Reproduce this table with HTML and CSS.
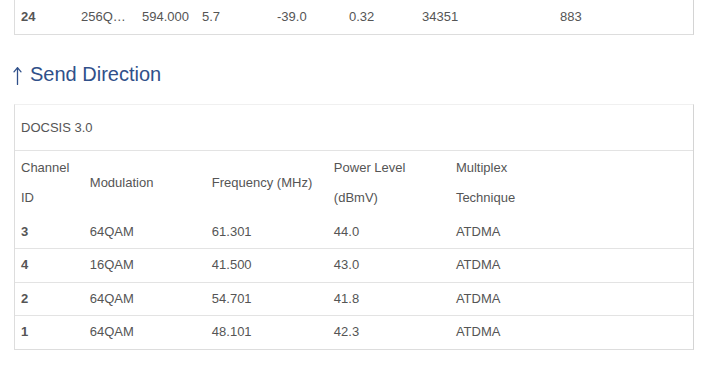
FILE: index.html
```html
<!DOCTYPE html>
<html>
<head>
<meta charset="utf-8">
<link rel="stylesheet" href="styles.css">
</head>
<body>
<div class="page">
  <div class="panel panel-top">
    <table class="grid grid-recv">
      <colgroup>
        <col class="r1"><col class="r2"><col class="r3"><col class="r4"><col class="r5"><col class="r6"><col class="r7"><col class="r8">
      </colgroup>
      <tbody>
        <tr>
          <td class="strong">24</td>
          <td class="clip">256QAM</td>
          <td>594.000</td>
          <td>5.7</td>
          <td>-39.0</td>
          <td>0.32</td>
          <td>34351</td>
          <td>883</td>
        </tr>
      </tbody>
    </table>
  </div>

  <h2 class="section-title">
    <svg class="arrow" width="9" height="19" viewBox="0 0 9 19" aria-hidden="true">
      <path d="M4.5 18.5V2 M1 5.8 L4.5 1.6 L8 5.8" fill="none" stroke="currentColor" stroke-width="1.3" stroke-linecap="round" stroke-linejoin="round"/>
    </svg>
    <span>Send Direction</span>
  </h2>

  <div class="panel">
    <div class="panel-heading">DOCSIS 3.0</div>
    <table class="grid grid-send">
      <colgroup>
        <col class="s1"><col class="s2"><col class="s3"><col class="s4"><col class="s5">
      </colgroup>
      <thead>
        <tr>
          <th>Channel<br>ID</th>
          <th>Modulation</th>
          <th>Frequency (MHz)</th>
          <th>Power Level<br>(dBmV)</th>
          <th>Multiplex<br>Technique</th>
        </tr>
      </thead>
      <tbody>
        <tr><td class="strong">3</td><td>64QAM</td><td>61.301</td><td>44.0</td><td>ATDMA</td></tr>
        <tr><td class="strong">4</td><td>16QAM</td><td>41.500</td><td>43.0</td><td>ATDMA</td></tr>
        <tr><td class="strong">2</td><td>64QAM</td><td>54.701</td><td>41.8</td><td>ATDMA</td></tr>
        <tr><td class="strong">1</td><td>64QAM</td><td>48.101</td><td>42.3</td><td>ATDMA</td></tr>
      </tbody>
    </table>
  </div>
</div>
</body>
</html>
```

FILE: styles.css
```css
html, body {
  margin: 0;
  padding: 0;
  background: #ffffff;
}

body {
  font-family: "Liberation Sans", Arial, sans-serif;
  font-size: 13px;
  color: #555555;
}

.page {
  width: 680px;
  padding-left: 14px;
}

.panel {
  border: 1px solid #dddddd;
  border-top-color: #f0f0f0;
  border-right-color: #d4d4d4;
  background: #ffffff;
}

.panel-top {
  border-top: none;
}

.panel-heading {
  padding: 14px 6px;
  line-height: 17px;
  border-bottom: 1px solid #e3e3e3;
}

.grid {
  width: 100%;
  border-collapse: collapse;
  table-layout: fixed;
}

.grid td,
.grid th {
  text-align: left;
  font-weight: normal;
  padding: 8px 6px 8px 7px;
  line-height: 16.5px;
  vertical-align: middle;
  white-space: nowrap;
}

.grid td:first-child,
.grid th:first-child {
  padding-left: 6px;
}

.grid-recv td {
  padding-top: 8.5px;
  padding-bottom: 8.5px;
  padding-left: 6px;
}

.grid-send th {
  padding-top: 2px;
  padding-bottom: 3px;
  line-height: 30px;
}

.grid-send tbody tr + tr td {
  border-top: 1px solid #e3e3e3;
}

.grid .strong {
  font-weight: bold;
}

.clip {
  overflow: hidden;
  text-overflow: ellipsis;
}

.r1 { width: 60px; }
.r2 { width: 61px; }
.r3 { width: 60px; }
.r4 { width: 75px; }
.r5 { width: 72px; }
.r6 { width: 73px; }
.r7 { width: 138px; }
.r8 { width: auto; }

.s1 { width: 10%; }
.s2 { width: 18%; }
.s3 { width: 18%; }
.s4 { width: 18%; }
.s5 { width: 36%; }

.section-title {
  display: flex;
  align-items: center;
  gap: 8px;
  margin: 25px 0 16px -1px;
  height: 28px;
  font-size: 20px;
  line-height: 28px;
  font-weight: normal;
  color: #30508a;
}

.arrow {
  display: block;
  flex: none;
  margin-top: 3px;
}
```
